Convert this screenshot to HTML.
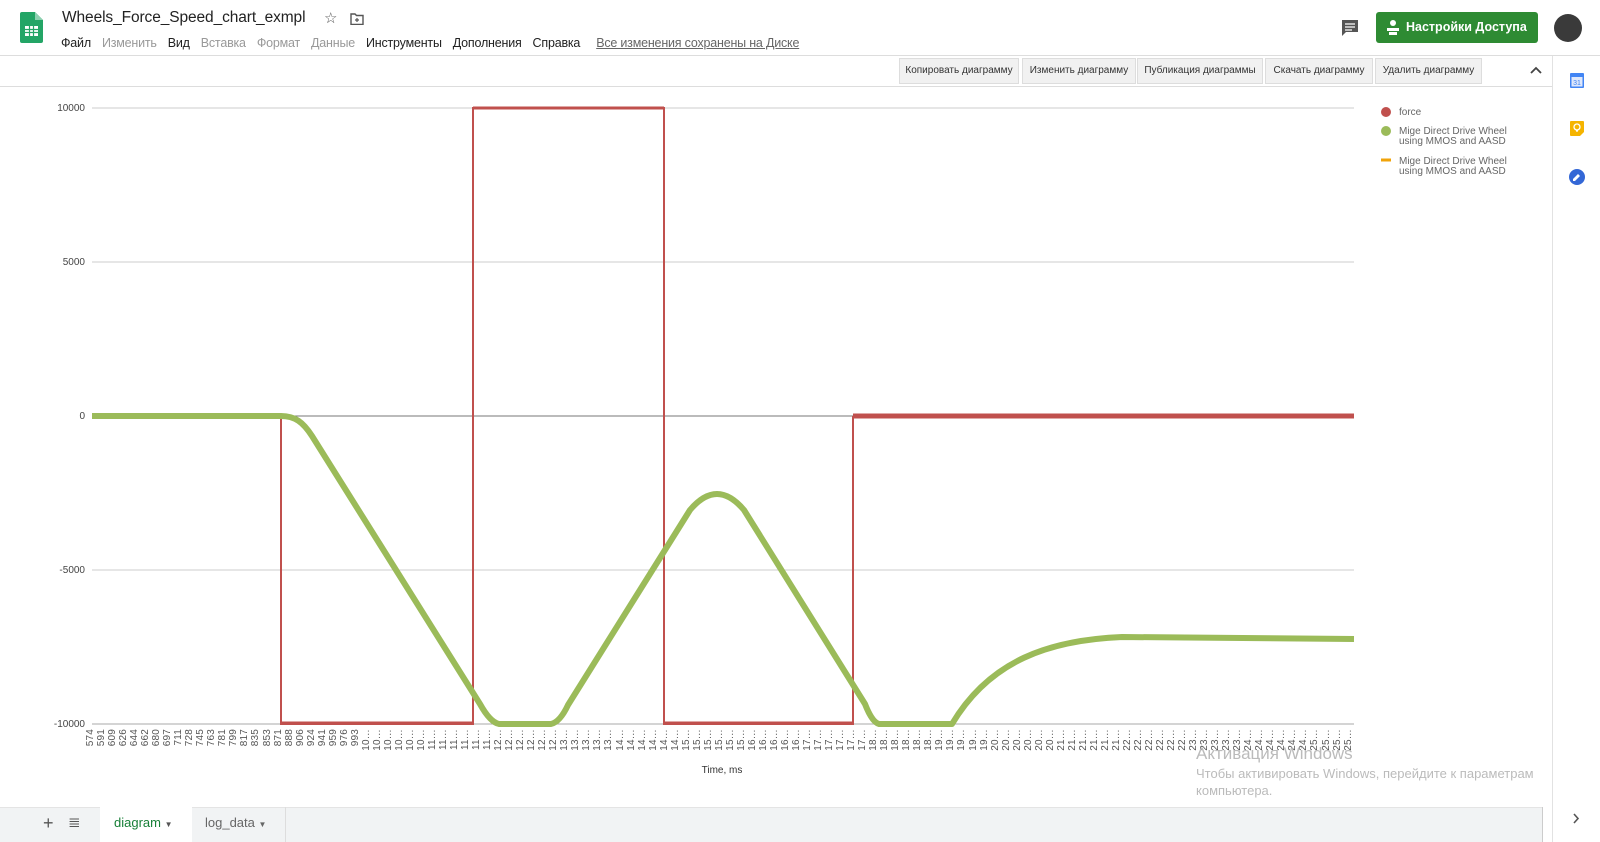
<!DOCTYPE html>
<html><head><meta charset="utf-8"><style>
*{margin:0;padding:0;box-sizing:border-box}
body{width:1600px;height:842px;overflow:hidden;background:#fff;font-family:"Liberation Sans",Arial,sans-serif;position:relative;color:#222}
.abs{position:absolute}
.menu span{margin-right:11px;font-size:12.5px;letter-spacing:-0.2px}
.menu .d{color:#999}
.btn{position:absolute;top:58px;height:26px;background:#f1f1f1;border:1px solid #ddd;font-size:10px;color:#333;line-height:24px;text-align:center}
.xl{position:absolute;left:85px;top:729px;display:flex;align-items:flex-start}
.xl span{width:11.04px;writing-mode:vertical-rl;transform:rotate(180deg);font-size:10px;color:#555;line-height:11px;letter-spacing:0.2px}
</style></head><body>
<svg class="abs" style="left:20px;top:12px" width="23" height="31" viewBox="0 0 23 31"><path d="M2 0H15L23 8V29a2 2 0 0 1-2 2H2a2 2 0 0 1-2-2V2a2 2 0 0 1 2-2z" fill="#23a566"/><path d="M15 0V8H23z" fill="#8ed1b1"/><rect x="5" y="14" width="13" height="10" fill="#fff"/><path d="M5 17.5H18M5 20.5H18M9.5 14V24M13.5 14V24" stroke="#23a566" stroke-width="1.2"/></svg>
<div class="abs" style="left:62px;top:9px;font-size:15.5px;color:#222;letter-spacing:-0.1px">Wheels_Force_Speed_chart_exmpl</div>
<div class="abs" style="left:324px;top:9px;font-size:15px;color:#555">☆</div>
<svg class="abs" style="left:350px;top:13px" width="14" height="12"><path d="M1 1h4l1.5 1.5H13v9H1z" fill="none" stroke="#555" stroke-width="1.4"/><path d="M7 5v4M5 7h4" stroke="#555" stroke-width="1.2"/></svg>
<div class="abs menu" style="left:61px;top:34px;white-space:nowrap"><span>Файл</span><span class="d">Изменить</span><span>Вид</span><span class="d">Вставка</span><span class="d">Формат</span><span class="d">Данные</span><span>Инструменты</span><span>Дополнения</span><span>Справка</span><span style="color:#666;text-decoration:underline;margin-left:5px">Все изменения сохранены на Диске</span></div>
<svg class="abs" style="left:1341px;top:19px" width="18" height="18"><path d="M1 1h16v12H5l-4 4z" fill="#555"/><path d="M4 5h10M4 8h10M4 11h7" stroke="#fff" stroke-width="1.2"/></svg>
<div class="abs" style="left:1376px;top:12px;width:162px;height:31px;background:#2e8b33;border-radius:3px;color:#fff;font-size:12.5px;font-weight:bold;line-height:31px;padding-left:30px">Настройки Доступа</div>
<svg class="abs" style="left:1386px;top:19px" width="14" height="17"><circle cx="7" cy="4" r="3" fill="#fff"/><path d="M1 9h12v3H1zM3 13h8v3H3z" fill="#fff"/></svg>
<div class="abs" style="left:1554px;top:14px;width:28px;height:28px;border-radius:50%;background:#3a3a3a"></div>
<div class="abs" style="left:0;top:55px;width:1600px;height:1px;background:#ddd"></div>
<div class="btn" style="left:899px;width:120px">Копировать диаграмму</div>
<div class="btn" style="left:1022px;width:114px">Изменить диаграмму</div>
<div class="btn" style="left:1137px;width:126px">Публикация диаграммы</div>
<div class="btn" style="left:1265px;width:108px">Скачать диаграмму</div>
<div class="btn" style="left:1375px;width:107px">Удалить диаграмму</div>
<svg class="abs" style="left:1530px;top:66px" width="12" height="9"><path d="M1 7l5-5 5 5" fill="none" stroke="#444" stroke-width="1.8"/></svg>
<div class="abs" style="left:0;top:86px;width:1552px;height:1px;background:#ddd"></div>
<div class="abs" style="left:1552px;top:56px;width:1px;height:786px;background:#e2e2e2"></div>
<svg class="abs" style="left:1570px;top:73px" width="14" height="15"><rect x="0" y="0" width="14" height="15" rx="1" fill="#4285f4"/><rect x="1.5" y="4" width="11" height="9.5" fill="#dfe8fb"/><text x="7" y="12" font-size="7" text-anchor="middle" fill="#4285f4" font-family="Liberation Sans">31</text></svg>
<svg class="abs" style="left:1570px;top:121px" width="14" height="15"><path d="M0 1a1 1 0 0 1 1-1h12a1 1 0 0 1 1 1v10l-4 4H1a1 1 0 0 1-1-1z" fill="#f5b400"/><circle cx="7" cy="6" r="3" fill="none" stroke="#fff" stroke-width="1.3"/><path d="M6 10h2" stroke="#fff" stroke-width="1.3"/></svg>
<svg class="abs" style="left:1569px;top:169px" width="16" height="16"><circle cx="8" cy="8" r="8" fill="#3367d6"/><path d="M4 10l5-5 2 2-5 5H4z" fill="#fff"/></svg>
<svg class="abs" style="left:1572px;top:813px" width="8" height="11"><path d="M2 1l4 4.5L2 10" fill="none" stroke="#555" stroke-width="1.6"/></svg>
<svg class="abs" style="left:0;top:0" width="1552" height="842">
<g stroke="#ccc" stroke-width="1"><path d="M92 108H1354M92 262H1354M92 570H1354"/></g>
<path d="M92 416H1354" stroke="#777" stroke-width="1"/>
<path d="M92 724H1354" stroke="#aaa" stroke-width="1"/>
<g font-size="10" fill="#444" text-anchor="end" font-family="Liberation Sans"><text x="85" y="111">10000</text><text x="85" y="265">5000</text><text x="85" y="419">0</text><text x="85" y="573">-5000</text><text x="85" y="727">-10000</text></g>
<path d="M281 416V724H473V108H664V724H853V416" fill="none" stroke="#c0504d" stroke-width="2"/>
<path d="M281 723H473M664 723H853" stroke="#c0504d" stroke-width="3"/>
<path d="M473 108H664" stroke="#c0504d" stroke-width="3"/>
<path d="M853 416H1354" stroke="#c0504d" stroke-width="5"/>
<path d="M92 416L281 416C295 416 303 422 312 436L480 704Q490 722 499 724L551 724Q560 722 568 705L690 510Q717 478 744 510L865 704Q872 722 879 724L952 724C990 660 1050 640 1122 637L1354 639" fill="none" stroke="#9bbb59" stroke-width="6" stroke-linejoin="round"/>
<text x="722" y="773" font-size="10" fill="#333" text-anchor="middle" font-family="Liberation Sans">Time, ms</text>
<circle cx="1386" cy="112" r="5" fill="#c0504d"/><circle cx="1386" cy="131" r="5" fill="#9bbb59"/><path d="M1381 160H1391" stroke="#f0a30a" stroke-width="3"/>
<g font-size="10" fill="#666" font-family="Liberation Sans"><text x="1399" y="115">force</text><text x="1399" y="134">Mige Direct Drive Wheel</text><text x="1399" y="144">using MMOS and AASD</text><text x="1399" y="164">Mige Direct Drive Wheel</text><text x="1399" y="174">using MMOS and AASD</text></g>
</svg>
<div class="xl"><span>574</span><span>591</span><span>609</span><span>626</span><span>644</span><span>662</span><span>680</span><span>697</span><span>711</span><span>728</span><span>745</span><span>763</span><span>781</span><span>799</span><span>817</span><span>835</span><span>853</span><span>871</span><span>888</span><span>906</span><span>924</span><span>941</span><span>959</span><span>976</span><span>993</span><span>10…</span><span>10…</span><span>10…</span><span>10…</span><span>10…</span><span>10…</span><span>11…</span><span>11…</span><span>11…</span><span>11…</span><span>11…</span><span>11…</span><span>12…</span><span>12…</span><span>12…</span><span>12…</span><span>12…</span><span>12…</span><span>13…</span><span>13…</span><span>13…</span><span>13…</span><span>13…</span><span>14…</span><span>14…</span><span>14…</span><span>14…</span><span>14…</span><span>14…</span><span>15…</span><span>15…</span><span>15…</span><span>15…</span><span>15…</span><span>15…</span><span>16…</span><span>16…</span><span>16…</span><span>16…</span><span>16…</span><span>17…</span><span>17…</span><span>17…</span><span>17…</span><span>17…</span><span>17…</span><span>18…</span><span>18…</span><span>18…</span><span>18…</span><span>18…</span><span>18…</span><span>19…</span><span>19…</span><span>19…</span><span>19…</span><span>19…</span><span>20…</span><span>20…</span><span>20…</span><span>20…</span><span>20…</span><span>20…</span><span>21…</span><span>21…</span><span>21…</span><span>21…</span><span>21…</span><span>21…</span><span>22…</span><span>22…</span><span>22…</span><span>22…</span><span>22…</span><span>22…</span><span>23…</span><span>23…</span><span>23…</span><span>23…</span><span>23…</span><span>24…</span><span>24…</span><span>24…</span><span>24…</span><span>24…</span><span>24…</span><span>25…</span><span>25…</span><span>25…</span><span>25…</span></div>
<div class="abs" style="left:1196px;top:744px;font-size:17px;color:#bbb">Активация Windows</div>
<div class="abs" style="left:1196px;top:765px;font-size:13px;color:#bbb;line-height:17px">Чтобы активировать Windows, перейдите к параметрам<br>компьютера.</div>
<div class="abs" style="left:0;top:807px;width:1542px;height:35px;background:#f1f3f4;border-top:1px solid #e4e4e4"></div>
<div class="abs" style="left:1542px;top:807px;width:1px;height:35px;background:#ccc"></div>
<div class="abs" style="left:43px;top:813px;font-size:18px;color:#555">+</div>
<div class="abs" style="left:68px;top:813px;font-size:15px;color:#555">≣</div>
<div class="abs" style="left:100px;top:807px;width:92px;height:35px;background:#fff;color:#188038;font-size:13px;line-height:32px;padding-left:14px">diagram <span style="font-size:8px;color:#555">▼</span></div>
<div class="abs" style="left:205px;top:807px;color:#666;font-size:13px;line-height:32px">log_data <span style="font-size:8px">▼</span></div>
<div class="abs" style="left:285px;top:807px;width:1px;height:35px;background:#ddd"></div>
</body></html>
